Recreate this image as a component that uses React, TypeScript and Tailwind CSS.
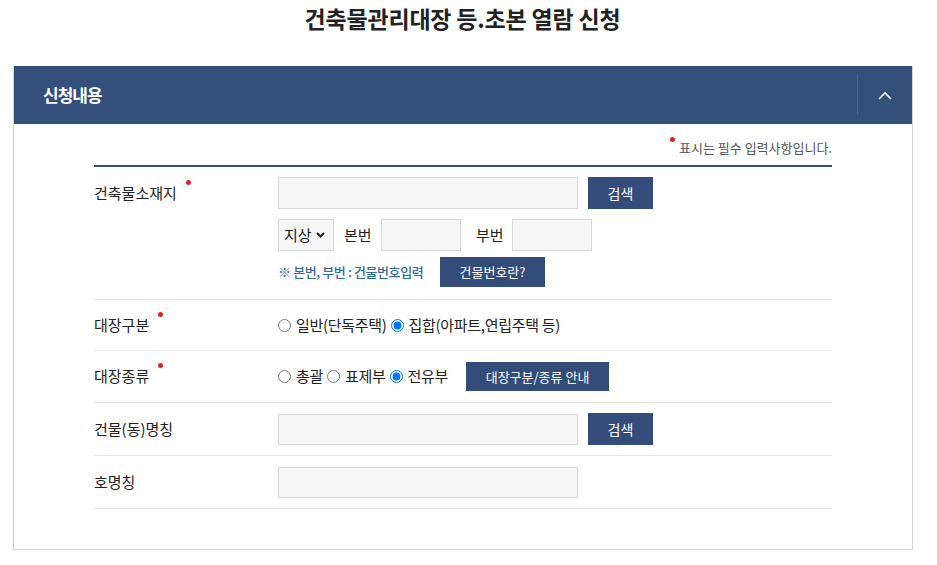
import React from 'react';

const FONT = { fontFamily: '"Noto Sans CJK KR", "Noto Sans", sans-serif' };

const Label = ({ text, required }: { text: string; required?: boolean }) => (
    <div className="w-[184px] shrink-0 text-[15px] text-[#222]">
        <span className="relative inline-block">
            {text}
            {required && <span className="absolute -right-[14px] -top-[2px] w-[5px] h-[5px] rounded-full bg-[#d7262b]"></span>}
        </span>
    </div>
);

const Btn = ({ children, w }: { children: React.ReactNode; w: string }) => (
    <button className={`${w} bg-[#334c7a] text-white text-[13px] flex items-center justify-center`}>{children}</button>
);

const Radio = ({ label, checked }: { label: string; checked?: boolean }) => (
    <label className="flex items-center gap-[5px]">
        <input type="radio" defaultChecked={checked} name={label} className="w-[13px] h-[13px] m-0" />
        <span>{label}</span>
    </label>
);

const App: React.FC = () => {
    return (
        <div className="w-[937px] h-[565px] bg-white overflow-hidden" style={FONT}>
            <h1 className="text-center text-[23px] font-bold text-[#222] tracking-[-0.2px] pt-[3px] pr-[12px] h-[66px] leading-[30px]">
                건축물관리대장 등.초본 열람 신청
            </h1>

            <div className="ml-[13px] w-[900px] border border-[#d4d4d4] border-t-0">
                {/* Header */}
                <div className="h-[58px] bg-[#354f7b] flex items-center">
                    <div className="flex-1 pl-[29px] text-white text-[17px] font-bold tracking-[-1px]">신청내용</div>
                    <div className="w-[55px] h-[40px] border-l border-[#4a628c] flex items-center justify-center">
                        <svg width="14" height="9" viewBox="0 0 14 9" fill="none">
                            <path d="M1 8 L7 2 L13 8" stroke="white" strokeWidth="1.6" />
                        </svg>
                    </div>
                </div>

                {/* Body */}
                <div className="px-[80px] pt-[12px] pb-[40px]">
                    <div className="flex justify-end items-start text-[13px] text-[#555] h-[29px]">
                        <span className="w-[5px] h-[5px] rounded-full bg-[#d7262b] mr-[4px] mt-[1px]"></span>
                        <span className="leading-[18px] mt-[3px]">표시는 필수 입력사항입니다.</span>
                    </div>

                    <div className="border-t-2 border-[#3d4f66]">
                        {/* Row 1 */}
                        <div className="flex pt-[10px] pb-[12px] border-b border-[#e6e6e6]">
                            <div className="h-[32px] flex items-center">
                                <Label text="건축물소재지" required />
                            </div>
                            <div className="flex flex-col">
                                <div className="flex gap-[10px]">
                                    <div className="w-[300px] h-[32px] bg-[#f6f6f6] border border-[#d9d9d9]"></div>
                                    <Btn w="w-[65px] h-[32px] text-[14px]">검색</Btn>
                                </div>
                                <div className="flex items-center text-[15px] text-[#222] mt-[10px]">
                                    <div className="w-[56px] h-[32px] bg-[#f6f6f6] border border-[#d9d9d9] flex items-center pl-[5px] gap-[4px]">
                                        <span>지상</span>
                                        <svg width="9" height="6" viewBox="0 0 9 6"><path d="M1 1 L4.5 4.5 L8 1" stroke="#222" strokeWidth="2" fill="none" /></svg>
                                    </div>
                                    <span className="ml-[10px] w-[37px]">본번</span>
                                    <div className="w-[80px] h-[32px] bg-[#f6f6f6] border border-[#d9d9d9]"></div>
                                    <span className="ml-[15px] w-[36px]">부번</span>
                                    <div className="w-[80px] h-[32px] bg-[#f6f6f6] border border-[#d9d9d9]"></div>
                                </div>
                                <div className="flex items-center mt-[6px]">
                                    <span className="text-[13px] font-medium text-[#2f6aa3] tracking-[-0.4px] w-[162px]">※ 본번, 부번 : 건물번호입력</span>
                                    <Btn w="w-[105px] h-[30px]">건물번호란?</Btn>
                                </div>
                            </div>
                        </div>

                        {/* Row 2 */}
                        <div className="flex items-center h-[51px] border-b border-[#e6e6e6]">
                            <Label text="대장구분" required />
                            <div className="flex items-center gap-[4px] text-[15px] text-[#222] tracking-[-0.3px]">
                                <Radio label="일반(단독주택)" />
                                <Radio label="집합(아파트,연립주택 등)" checked />
                            </div>
                        </div>

                        {/* Row 3 */}
                        <div className="flex items-center h-[52px] border-b border-[#e6e6e6]">
                            <Label text="대장종류" required />
                            <div className="flex items-center gap-[4px] text-[15px] text-[#222] tracking-[-0.3px]">
                                <Radio label="총괄" />
                                <Radio label="표제부" />
                                <Radio label="전유부" checked />
                            </div>
                            <div className="ml-[18px]">
                                <Btn w="w-[143px] h-[29px]">대장구분/종류 안내</Btn>
                            </div>
                        </div>

                        {/* Row 4 */}
                        <div className="flex items-center h-[53px] border-b border-[#e6e6e6]">
                            <Label text="건물(동)명칭" />
                            <div className="flex items-center gap-[10px]">
                                <div className="w-[300px] h-[31px] bg-[#f6f6f6] border border-[#d9d9d9]"></div>
                                <Btn w="w-[65px] h-[32px] text-[14px]">검색</Btn>
                            </div>
                        </div>

                        {/* Row 5 */}
                        <div className="flex items-center h-[53px] border-b border-[#e6e6e6]">
                            <Label text="호명칭" />
                            <div className="w-[300px] h-[31px] bg-[#f6f6f6] border border-[#d9d9d9]"></div>
                        </div>
                    </div>
                </div>
            </div>
        </div>
    );
};

export default App;
